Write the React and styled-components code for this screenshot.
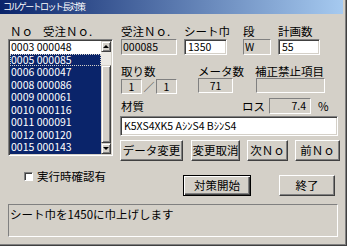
import React from "react";
import styled, { createGlobalStyle, css } from "styled-components";

const FONT = `"Noto Sans CJK JP", "Noto Sans", sans-serif`;

const GlobalStyle = createGlobalStyle`
  html, body { margin: 0; padding: 0; background: #d4d0c8; }
  body { font-family: ${FONT}; }
`;

const Window = styled.div`
  width: 347px;
  height: 246px;
  box-sizing: border-box;
  background: #d4d0c8;
  border-right: 1px solid #404040;
  border-bottom: 1px solid #404040;
  box-shadow: inset -1px -1px 0 #808080;
  padding: 0 3px 3px 0;
  display: flex;
  flex-direction: column;
  font-family: ${FONT};
  color: #000;
  overflow: hidden;
`;

const TitleBar = styled.div`
  height: 14px;
  flex: none;
  background: linear-gradient(to right, #0a246a, #a6caf0);
  color: #fff;
  font-size: 9px;
  line-height: 14px;
  padding-left: 3px;
  letter-spacing: -1.6px;
  white-space: nowrap;
`;

const Main = styled.div`
  display: flex;
  padding-left: 8px;
  margin-top: 11px;
`;

const LeftCol = styled.div`
  width: 105px;
  display: flex;
  flex-direction: column;
`;

const ListHeader = styled.div`
  display: flex;
  height: 13px;
  line-height: 13px;
  font-size: 11.5px;
  padding-left: 2px;
  white-space: nowrap;
`;

const HeadCell = styled.span`
  width: ${(p) => p.$w}px;
`;

const ListBox = styled.div`
  margin-top: 1px;
  height: 117px;
  box-sizing: border-box;
  border: 1px solid;
  border-color: #808080 #fff #fff #808080;
  box-shadow: inset 1px 1px 0 #404040, inset -1px -1px 0 #d4d0c8;
  padding: 1px;
  background: #fff;
  display: flex;
`;

const Items = styled.div`
  flex: 1;
`;

const Item = styled.div`
  height: 12.5px;
  line-height: 12.5px;
  font-size: 10.5px;
  padding-left: 1px;
  white-space: nowrap;
  ${(p) =>
    p.$selected &&
    css`
      background: #0a246a;
      color: #fff;
    `}
  ${(p) =>
    p.$focus &&
    css`
      outline: 1px dotted #d4d0c8;
      outline-offset: -1px;
    `}
`;

const ScrollBar = styled.div`
  width: 10px;
  display: flex;
  flex-direction: column;
`;

const ArrowBtn = styled.div`
  height: 11px;
  box-sizing: border-box;
  background: #d4d0c8;
  border: 1px solid;
  border-color: #d4d0c8 #404040 #404040 #d4d0c8;
  box-shadow: inset 1px 1px 0 #fff, inset -1px -1px 0 #808080;
  display: flex;
  align-items: center;
  justify-content: center;

  &::after {
    content: "";
    border-left: 3px solid transparent;
    border-right: 3px solid transparent;
    ${(p) =>
      p.$down
        ? css`border-top: 3px solid #000;`
        : css`border-bottom: 3px solid #000;`}
  }
`;

const Track = styled.div`
  flex: 1;
  background: #ebe9e4;
  display: flex;
  flex-direction: column;
  justify-content: flex-end;
`;

const Thumb = styled.div`
  height: 78px;
  box-sizing: border-box;
  background: #d4d0c8;
  border: 1px solid;
  border-color: #d4d0c8 #404040 #404040 #d4d0c8;
  box-shadow: inset 1px 1px 0 #fff, inset -1px -1px 0 #808080;
`;

const RightCol = styled.div`
  margin-left: 7px;
  width: 222px;
  display: flex;
  flex-direction: column;
`;

const FieldRow = styled.div`
  display: flex;
  padding-left: 1px;
  margin-top: ${(p) => p.$top || 0}px;
  align-items: ${(p) => p.$align || "stretch"};
`;

const Field = styled.div`
  display: flex;
  flex-direction: column;
  margin-left: ${(p) => p.$gap || 0}px;
`;

const Label = styled.div`
  height: ${(p) => p.$h || 13}px;
  line-height: ${(p) => p.$h || 13}px;
  font-size: 11.5px;
  white-space: nowrap;
`;

const Box = styled.div`
  width: ${(p) => p.$w}px;
  height: ${(p) => p.$h || 16}px;
  margin-top: 1px;
  box-sizing: border-box;
  border: 1px solid;
  border-color: #808080 #fff #fff #808080;
  background: #d4d0c8;
  font-size: 10.5px;
  line-height: ${(p) => (p.$h || 16) - 2}px;
  padding: 0 ${(p) => (p.$align === "right" ? 4 : 1)}px 0 1px;
  text-align: ${(p) => p.$align || "left"};
  white-space: nowrap;
  ${(p) =>
    p.$edit &&
    css`
      background: #fff;
      box-shadow: inset 1px 1px 0 #404040, inset -1px -1px 0 #d4d0c8;
      padding-left: 3px;
    `}
`;

const PairGroup = styled.div`
  display: flex;
  align-items: center;
  margin-top: 1px;
`;

const Slash = styled.span`
  width: 14px;
  text-align: center;
  font-size: 11px;
  line-height: 14px;
  color: #333;
`;

const InlineLabel = styled.span`
  font-size: 11.5px;
  line-height: 16px;
  white-space: nowrap;
  margin-left: ${(p) => p.$gap || 0}px;
  margin-right: ${(p) => p.$after || 0}px;
`;

const TextBox = styled.div`
  margin-top: 2px;
  width: 218px;
  height: 20px;
  box-sizing: border-box;
  border: 1px solid;
  border-color: #808080 #fff #fff #808080;
  box-shadow: inset 1px 1px 0 #404040, inset -1px -1px 0 #d4d0c8;
  background: #fff;
  font-size: 10.5px;
  line-height: 18px;
  padding-left: 3px;
  white-space: nowrap;
`;

const ButtonRow = styled.div`
  display: flex;
  margin-top: 4px;
`;

const Button = styled.div`
  width: ${(p) => p.$w}px;
  height: 21px;
  margin-left: ${(p) => p.$gap || 0}px;
  box-sizing: border-box;
  background: #d4d0c8;
  border: 1px solid;
  border-color: #fff #404040 #404040 #fff;
  box-shadow: inset -1px -1px 0 #808080;
  font-size: 11.5px;
  line-height: 19px;
  text-align: center;
  white-space: nowrap;
  ${(p) =>
    p.$default &&
    css`
      border-color: #000;
      box-shadow: inset 1px 1px 0 #fff, inset -1px -1px 0 #404040,
        inset -2px -2px 0 #808080;
    `}
`;

const Footer = styled.div`
  display: flex;
  margin-top: 9px;
  padding-left: 24px;
`;

const CheckArea = styled.div`
  width: 159px;
  display: flex;
  align-items: center;
  height: 12px;
`;

const CheckBox = styled.span`
  width: 9px;
  height: 9px;
  box-sizing: border-box;
  background: #fff;
  border: 1px solid;
  border-color: #808080 #fff #fff #808080;
  box-shadow: inset 1px 1px 0 #404040;
`;

const CheckLabel = styled.span`
  margin-left: 4px;
  font-size: 11.5px;
  line-height: 12px;
  white-space: nowrap;
`;

const FooterButtons = styled.div`
  display: flex;
  margin-top: 5px;
`;

const Status = styled.div`
  margin: 8px 0 0 8px;
  width: 330px;
  height: 33px;
  box-sizing: border-box;
  border: 1px solid;
  border-color: #808080 #fff #fff #808080;
  font-size: 11.5px;
  line-height: 14px;
  padding: 2px 1px;
  white-space: nowrap;
`;

const rows = [
  ["0003 000048", false],
  ["0005 000085", true],
  ["0006 000047", true],
  ["0008 000086", true],
  ["0009 000061", true],
  ["0010 000116", true],
  ["0011 000091", true],
  ["0012 000120", true],
  ["0015 000143", true],
];

export default function App() {
  return (
    <>
      <GlobalStyle />
      <Window>
        <TitleBar>コルゲートロット長対策</TitleBar>
        <Main>
          <LeftCol>
            <ListHeader>
              <HeadCell $w={33}>Ｎｏ</HeadCell>
              <HeadCell>受注Ｎｏ.</HeadCell>
            </ListHeader>
            <ListBox>
              <Items>
                {rows.map(([text, sel], i) => (
                  <Item key={text} $selected={sel} $focus={i === 1}>
                    {text}
                  </Item>
                ))}
              </Items>
              <ScrollBar>
                <ArrowBtn />
                <Track>
                  <Thumb />
                </Track>
                <ArrowBtn $down />
              </ScrollBar>
            </ListBox>
          </LeftCol>

          <RightCol>
            <FieldRow>
              <Field>
                <Label>受注Ｎｏ.</Label>
                <Box $w={56}>000085</Box>
              </Field>
              <Field $gap={7}>
                <Label>シート巾</Label>
                <Box $w={43} $edit>1350</Box>
              </Field>
              <Field $gap={13}>
                <Label>段</Label>
                <Box $w={28}>W</Box>
              </Field>
              <Field $gap={7}>
                <Label>計画数</Label>
                <Box $w={42} $edit>55</Box>
              </Field>
            </FieldRow>

            <FieldRow $top={10}>
              <Field>
                <Label $h={12}>取り数</Label>
                <PairGroup>
                  <Box $w={21} $h={15} $align="center">1</Box>
                  <Slash>／</Slash>
                  <Box $w={21} $h={15} $align="center">1</Box>
                </PairGroup>
              </Field>
              <Field $gap={21}>
                <Label $h={12}>メータ数</Label>
                <Box $w={35} $h={15} $align="center">71</Box>
              </Field>
              <Field $gap={11}>
                <Label $h={12}>補正禁止項目</Label>
                <Box $w={69} $h={15} style={{ marginLeft: 1 }} />
              </Field>
            </FieldRow>

            <FieldRow $top={4} $align="flex-end">
              <InlineLabel>材質</InlineLabel>
              <FieldRow $align="center">
                <InlineLabel $gap={97} $after={4}>ロス</InlineLabel>
                <Box $w={42} $align="right" style={{ marginTop: 0 }}>7.4</Box>
                <InlineLabel $gap={7}>%</InlineLabel>
              </FieldRow>
            </FieldRow>

            <TextBox>K5XS4XK5 AｼﾝS4 BｼﾝS4</TextBox>

            <ButtonRow>
              <Button $w={63}>データ変更</Button>
              <Button $w={49} $gap={8}>変更取消</Button>
              <Button $w={41} $gap={7}>次Ｎｏ</Button>
              <Button $w={45} $gap={7}>前Ｎｏ</Button>
            </ButtonRow>
          </RightCol>
        </Main>

        <Footer>
          <CheckArea>
            <CheckBox />
            <CheckLabel>実行時確認有</CheckLabel>
          </CheckArea>
          <FooterButtons>
            <Button $w={68} $default>対策開始</Button>
            <Button $w={56} $gap={28}>終了</Button>
          </FooterButtons>
        </Footer>

        <Status>シート巾を1450に巾上げします</Status>
      </Window>
    </>
  );
}
